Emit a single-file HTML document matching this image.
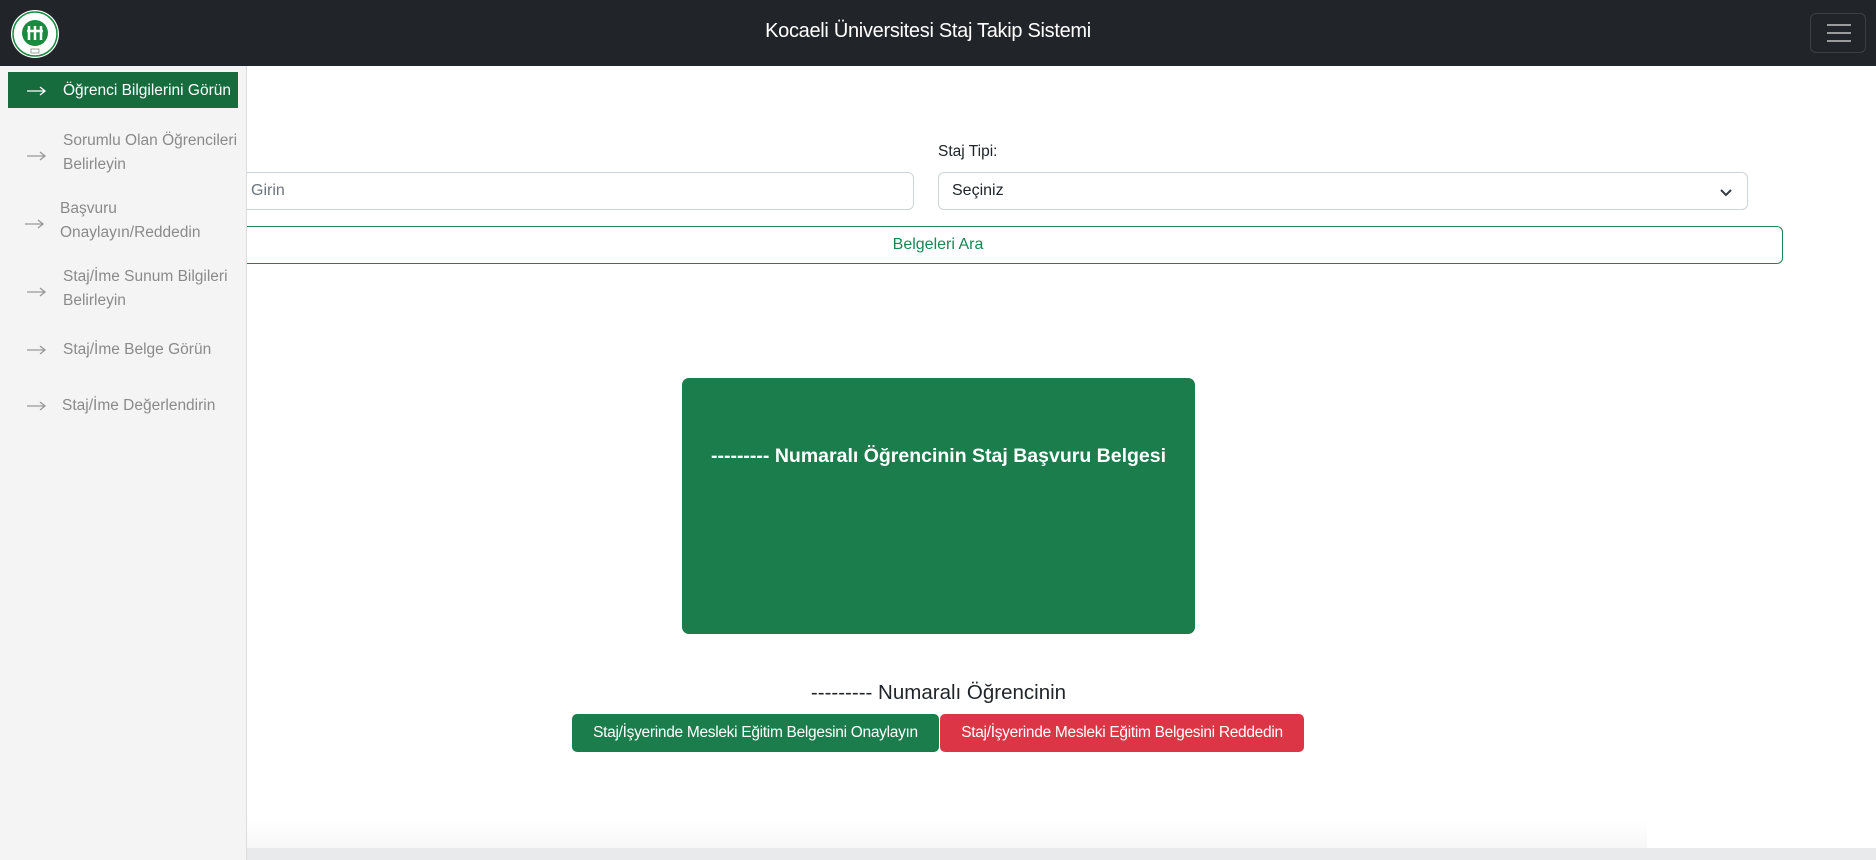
<!DOCTYPE html>
<html><head><meta charset="utf-8"><style>
*{box-sizing:border-box;margin:0;padding:0}
body{width:1876px;height:860px;overflow:hidden;background:#fff;font-family:"Liberation Sans",Arial,sans-serif;position:relative;color:#212529}
.nav{position:absolute;left:0;top:0;width:1876px;height:66px;background:#212529}
.title{position:absolute;left:0;width:1856px;top:20px;text-align:center;color:#fff;font-size:20px;letter-spacing:-0.3px}
.ham{position:absolute;left:1810px;top:13px;width:56px;height:40px;border:1px solid #3a3f44;border-radius:6px}
.ham i{position:absolute;left:16px;width:24px;height:2px;background:#9a9c9e}
.side{position:absolute;left:0;top:66px;width:247px;height:794px;background:#f4f4f4;border-right:1px solid #dcdcdc;z-index:2}
.it{position:absolute;color:#8a8a8a;font-size:15.5px;line-height:24px}
.ar{position:absolute;width:20px;height:10px}
.act{position:absolute;left:8px;top:6px;width:230px;height:36px;background:#176c3e}
.inp{position:absolute;left:93px;top:172px;width:821px;height:38px;border:1px solid #ced4da;border-radius:6px;font-size:16px;color:#6c757d;padding:9px 157px}
.sel{position:absolute;left:938px;top:172px;width:810px;height:38px;border:1px solid #ced4da;border-radius:6px;font-size:16px;padding:9px 13px}
.btn{position:absolute;left:93px;top:226px;width:1690px;height:38px;border:1px solid #198754;border-radius:6px;color:#198754;font-size:16px;text-align:center;line-height:36px}
.box{position:absolute;left:682px;top:378px;width:513px;height:256px;background:#1a7d4b;border-radius:7px;color:#fff;font-size:19.5px;font-weight:bold;text-align:center;padding-top:67px}
.b{position:absolute;top:714px;height:38px;color:#fff;font-size:15.5px;line-height:38px;text-align:center;border-radius:5px;letter-spacing:-0.3px}
</style></head><body>
<div class="nav">
<svg style="position:absolute;left:10px;top:9px" width="50" height="50" viewBox="0 0 50 50"><circle cx="25" cy="25" r="24" fill="#fff"/><circle cx="25" cy="25" r="22" fill="none" stroke="#1a8a3f" stroke-width="1.5"/><circle cx="25" cy="24" r="13" fill="#1a8a3f"/><path d="M19 17v14M25 17v14M31 17v14M17 22h16" stroke="#fff" stroke-width="2.5"/><rect x="21" y="40" width="8" height="4" fill="none" stroke="#666" stroke-width=".6"/></svg>
<div class="title">Kocaeli Üniversitesi Staj Takip Sistemi</div>
<div class="ham"><i style="top:10px"></i><i style="top:18px"></i><i style="top:26px"></i></div>
</div>
<div class="side">
<div class="act"></div>
<svg class="ar" style="left:27px;top:20px" viewBox="0 0 20 10"><path d="M0 5h18M13 1l5 4-5 4" fill="none" stroke="#fff" stroke-width="1.3"/></svg><div class="it" style="left:63px;top:13px;color:#fff">Öğrenci Bilgilerini Görün</div>
<svg class="ar" style="left:27px;top:85px" viewBox="0 0 20 10"><path d="M0 5h18M13 1l5 4-5 4" fill="none" stroke="#999" stroke-width="1.3"/></svg><div class="it" style="left:63px;top:63px">Sorumlu Olan Öğrencileri<br>Belirleyin</div>
<svg class="ar" style="left:25px;top:153px" viewBox="0 0 20 10"><path d="M0 5h18M13 1l5 4-5 4" fill="none" stroke="#999" stroke-width="1.3"/></svg><div class="it" style="left:60px;top:131px">Başvuru<br>Onaylayın/Reddedin</div>
<svg class="ar" style="left:27px;top:221px" viewBox="0 0 20 10"><path d="M0 5h18M13 1l5 4-5 4" fill="none" stroke="#999" stroke-width="1.3"/></svg><div class="it" style="left:63px;top:199px">Staj/İme Sunum Bilgileri<br>Belirleyin</div>
<svg class="ar" style="left:27px;top:279px" viewBox="0 0 20 10"><path d="M0 5h18M13 1l5 4-5 4" fill="none" stroke="#999" stroke-width="1.3"/></svg><div class="it" style="left:63px;top:272px">Staj/İme Belge Görün</div>
<svg class="ar" style="left:27px;top:335px" viewBox="0 0 20 10"><path d="M0 5h18M13 1l5 4-5 4" fill="none" stroke="#999" stroke-width="1.3"/></svg><div class="it" style="left:62px;top:328px">Staj/İme Değerlendirin</div>
</div>
<div style="position:absolute;left:938px;top:143px;font-size:15.5px">Staj Tipi:</div>
<div class="inp">Girin</div>
<div class="sel">Seçiniz<svg style="position:absolute;right:14px;top:15px" width="14" height="9" viewBox="0 0 14 9"><path d="M2 2l5 5 5-5" fill="none" stroke="#343a40" stroke-width="2"/></svg></div>
<div class="btn">Belgeleri Ara</div>
<div class="box">--------- Numaralı Öğrencinin Staj Başvuru Belgesi</div>
<div style="position:absolute;left:682px;width:513px;top:681px;text-align:center;font-size:20.5px">--------- Numaralı Öğrencinin</div>
<div class="b" style="left:572px;width:367px;background:#1a7d4b">Staj/İşyerinde Mesleki Eğitim Belgesini Onaylayın</div>
<div class="b" style="left:940px;width:364px;background:#dc3545">Staj/İşyerinde Mesleki Eğitim Belgesini Reddedin</div>
<div style="position:absolute;left:247px;top:820px;width:1400px;height:28px;background:linear-gradient(#fff,#f7f7f7)"></div>
<div style="position:absolute;left:247px;top:848px;width:1629px;height:12px;background:#e9eaec"></div>
</body></html>
